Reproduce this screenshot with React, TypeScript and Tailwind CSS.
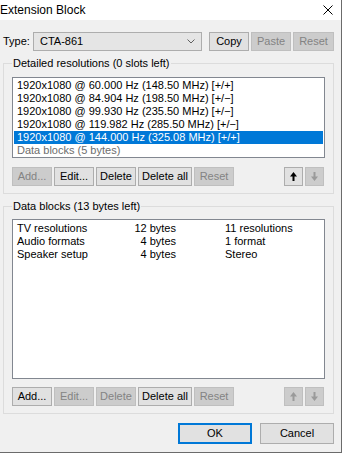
import type { ReactNode } from 'react'

const font = { fontFamily: '"Liberation Sans", Arial, sans-serif' }

function Btn({ children, w, disabled, className = '' }: { children: ReactNode; w: string; disabled?: boolean; className?: string }) {
  return (
    <div
      className={`${w} flex h-[19px] items-center justify-center whitespace-nowrap border text-[11px] leading-none ${
        disabled ? 'border-[#bfbfbf] bg-[#cccccc] text-[#838383]' : 'border-[#adadad] bg-[#e1e1e1] text-black'
      } ${className}`}
    >
      {children}
    </div>
  )
}

function Arrow({ down, disabled }: { down?: boolean; disabled?: boolean }) {
  return (
    <div
      className={`flex h-[19px] w-[19px] items-center justify-center border ${
        disabled ? 'border-[#bfbfbf] bg-[#cccccc]' : 'border-[#adadad] bg-[#e1e1e1]'
      }`}
    >
      <svg width="7" height="9" viewBox="0 0 7 9" className={down ? 'rotate-180' : ''}>
        <polygon points="3.5,0 7,4.5 4.5,4.5 4.5,9 2.5,9 2.5,4.5 0,4.5" fill={disabled ? '#9a9a9a' : '#000000'} />
      </svg>
    </div>
  )
}

function ButtonRow({ addOn, editOn, delOn, upOn }: { addOn: boolean; editOn: boolean; delOn: boolean; upOn: boolean }) {
  return (
    <div className="flex items-center pr-[1px]">
      <Btn w="w-[40px]" disabled={!addOn}>Add...</Btn>
      <Btn w="w-[40px]" disabled={!editOn} className="ml-[2px]">Edit...</Btn>
      <Btn w="w-[40px]" disabled={!delOn} className="ml-[2px]">Delete</Btn>
      <Btn w="w-[54px]" className="ml-[2px]">Delete all</Btn>
      <Btn w="w-[40px]" disabled className="ml-[2px]">Reset</Btn>
      <div className="ml-auto flex gap-[2px]">
        <Arrow disabled={!upOn} />
        <Arrow down disabled />
      </div>
    </div>
  )
}

const resolutions = [
  '1920x1080 @ 60.000 Hz (148.50 MHz) [+/+]',
  '1920x1080 @ 84.904 Hz (198.50 MHz) [+/\u2212]',
  '1920x1080 @ 99.930 Hz (235.50 MHz) [+/\u2212]',
  '1920x1080 @ 119.982 Hz (285.50 MHz) [+/\u2212]',
  '1920x1080 @ 144.000 Hz (325.08 MHz) [+/+]',
]

const blocks = [
  ['TV resolutions', '12 bytes', '11 resolutions'],
  ['Audio formats', '4 bytes', '1 format'],
  ['Speaker setup', '4 bytes', 'Stereo'],
]

export default function App() {
  return (
    <div className="h-[457px] w-[344px] overflow-hidden bg-white text-black" style={font}>
      <div className="flex h-[453px] w-[342px] flex-col border-r border-b border-[#6b6b6b]">
        {/* title bar */}
        <div className="flex h-[20px] items-center justify-between bg-white">
          <span className="text-[12px] leading-none">Extension Block</span>
          <svg width="10" height="10" viewBox="0 0 10 10" className="mr-[8px]">
            <path d="M0.5 0.5 L9.5 9.5 M9.5 0.5 L0.5 9.5" stroke="#000" strokeWidth="1" />
          </svg>
        </div>

        <div className="flex flex-1 flex-col bg-[#f0f0f0]">
          {/* type row */}
          <div className="mt-[12px] flex items-center text-[11px]">
            <span className="ml-[3px] w-[30px]">Type:</span>
            <div className="flex h-[19px] w-[169px] items-center justify-between border border-[#adadad] bg-[#e5e5e5] pl-[6px] pr-[6px]">
              <span>CTA-861</span>
              <svg width="8" height="5" viewBox="0 0 8 5">
                <path d="M0.5 0.5 L4 4 L7.5 0.5" stroke="#606060" fill="none" strokeWidth="1" />
              </svg>
            </div>
            <Btn w="w-[40px]" className="ml-[7px]">Copy</Btn>
            <Btn w="w-[40px]" disabled className="ml-[2px]">Paste</Btn>
            <Btn w="w-[41px]" disabled className="ml-[2px]">Reset</Btn>
          </div>

          {/* detailed resolutions */}
          <fieldset className="ml-[3px] mt-[5px] w-[331px] border border-[#dcdcdc] px-[8px] pb-[7px]">
            <legend className="px-[1px] text-[11px] leading-[14px]">Detailed resolutions (0 slots left)</legend>
            <div className="mt-[7px] h-[81px] border border-[#828790] bg-white p-[1px] text-[11px]">
              {resolutions.map((r, i) => (
                <div
                  key={r}
                  className={`h-[13px] whitespace-nowrap pl-[3px] leading-[13px] ${i === 4 ? 'bg-[#0078d7] text-white' : ''}`}
                >
                  {r}
                </div>
              ))}
              <div className="h-[13px] pl-[3px] leading-[13px] text-[#6d6d6d]">Data blocks (5 bytes)</div>
            </div>
            <div className="mt-[9px]">
              <ButtonRow addOn={false} editOn delOn upOn />
            </div>
          </fieldset>

          {/* data blocks */}
          <fieldset className="ml-[3px] mt-[5px] w-[331px] border border-[#dcdcdc] px-[8px] pb-[7px]">
            <legend className="px-[1px] text-[11px] leading-[14px]">Data blocks (13 bytes left)</legend>
            <div className="mt-[6px] h-[160px] border border-[#828790] bg-white p-[1px] pt-[2px] text-[11px]">
              {blocks.map(([a, b, c]) => (
                <div key={a} className="flex h-[13px] whitespace-nowrap pl-[3px] leading-[13px]">
                  <span className="w-[105px]">{a}</span>
                  <span className="w-[54px] text-right">{b}</span>
                  <span className="ml-[49px]">{c}</span>
                </div>
              ))}
            </div>
            <div className="mt-[8px]">
              <ButtonRow addOn editOn={false} delOn={false} upOn={false} />
            </div>
          </fieldset>

          {/* dialog buttons */}
          <div className="mt-[9px] flex">
            <div className="ml-[178px] flex h-[21px] w-[74px] items-center justify-center border-2 border-[#0078d7] bg-[#e1e1e1] text-[11px]">
              OK
            </div>
            <div className="ml-[8px] flex h-[21px] w-[74px] items-center justify-center border border-[#adadad] bg-[#e1e1e1] text-[11px]">
              Cancel
            </div>
          </div>
        </div>
      </div>
    </div>
  )
}
